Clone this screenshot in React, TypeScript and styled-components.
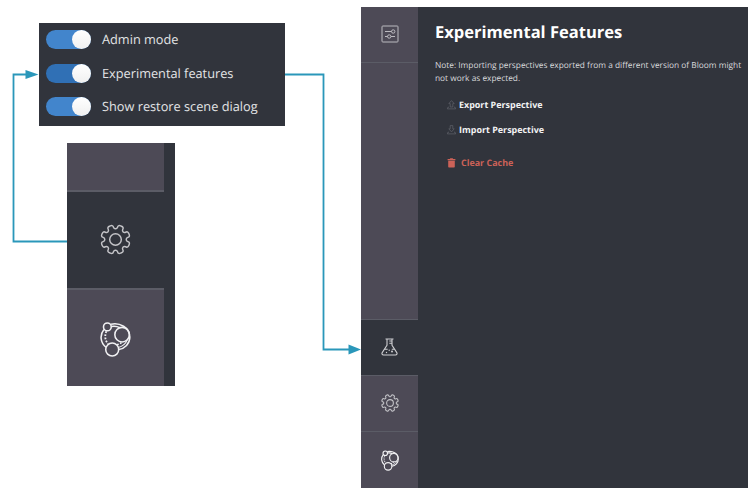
import React from "react";
import styled, { createGlobalStyle } from "styled-components";

const Global = createGlobalStyle`
  * { box-sizing: border-box; }
  html, body { margin: 0; background: #fff; }
  body { font-family: "Open Sans", "Noto Sans", sans-serif; overflow: hidden; text-rendering: geometricPrecision; }
  svg { display: block; }
  h1, p { margin: 0; }
`;

/* Free canvas holding the three captures and their connectors */
const Diagram = styled.main`
  position: relative;
  width: 755px;
  height: 494px;
  background: #fff;
  overflow: hidden;
`;

const Node = styled.section<{ $x: number; $y: number; $w: number; $h: number }>`
  position: absolute;
  left: ${(p) => p.$x}px;
  top: ${(p) => p.$y}px;
  width: ${(p) => p.$w}px;
  height: ${(p) => p.$h}px;
  background: #31343c;
  display: flex;
`;

const Connectors = styled.svg`
  position: absolute;
  inset: 0;
`;

const ToggleList = styled.div`
  display: flex;
  flex-direction: column;
  gap: 14.7px;
  padding: 7px 0 0 7px;
`;

const ToggleRow = styled.label`
  display: flex;
  align-items: center;
  gap: 11px;
  height: 19px;
  color: #e3e4e6;
  font-size: 12.75px;
  line-height: 19px;
  white-space: nowrap;
`;

const Track = styled.span<{ $focused?: boolean }>`
  display: flex;
  justify-content: flex-end;
  width: 45px;
  height: 19px;
  border-radius: 10px;
  background: ${(p) => (p.$focused ? "#3070b5" : "#4285cc")};
`;

const Knob = styled.span`
  width: 19px;
  height: 19px;
  border-radius: 50%;
  background: linear-gradient(#fff, #f0f0f0);
`;

const Rail = styled.nav<{ $w: number }>`
  display: flex;
  flex-direction: column;
  flex: none;
  width: ${(p) => p.$w}px;
  background: #4d4a56;
`;

const RailItem = styled.div<{ $h?: number; $active?: boolean; $line?: number; $lift?: number; $drop?: number }>`
  display: flex;
  align-items: center;
  justify-content: center;
  ${(p) => (p.$h ? `height: ${p.$h}px; flex: none;` : "flex: 1;")}
  padding-bottom: ${(p) => p.$lift ?? 0}px;
  padding-top: ${(p) => p.$drop ?? 0}px;
  background: ${(p) => (p.$active ? "#31343c" : "#4d4a56")};
  border-top: ${(p) => p.$line ?? 0}px solid #5b5c66;
`;

const Content = styled.div`
  flex: 1;
  padding: 12px 0 0 17px;
`;

const Title = styled.h1`
  color: #fff;
  font-size: 16.55px;
  line-height: 25px;
  font-weight: 700;
  white-space: nowrap;
`;

const Note = styled.p`
  margin-top: 15px;
  color: #d9dadc;
  font-size: 8.33px;
  line-height: 13px;
  white-space: nowrap;
`;

const Actions = styled.div`
  display: flex;
  flex-direction: column;
  padding: 13px 0 0 12px;
`;

const Action = styled.div<{ $danger?: boolean }>`
  display: flex;
  align-items: center;
  gap: ${(p) => (p.$danger ? 5 : 3)}px;
  height: 14px;
  margin-bottom: ${(p) => (p.$danger ? 0 : 11)}px;
  margin-top: ${(p) => (p.$danger ? 7.5 : 0)}px;
  color: ${(p) => (p.$danger ? "#cc6258" : "#f3f3f4")};
  font-size: 8.95px;
  line-height: 14px;
  font-weight: 700;
  white-space: nowrap;
`;

const gearPath = (() => {
  const at = (deg: number, r: number) => {
    const a = ((deg - 90) * Math.PI) / 180;
    return [16 + r * Math.cos(a), 16 + r * Math.sin(a)];
  };
  const pts: number[][] = [];
  for (let i = 0; i < 8; i++) {
    const c = i * 45 + 22.5;
    pts.push(at(c - 15, 11.2), at(c - 11, 15.3), at(c + 11, 15.3), at(c + 15, 11.2));
  }
  const f = (n: number) => n.toFixed(2);
  const mix = (a: number[], b: number[], t: number) => [a[0] + (b[0] - a[0]) * t, a[1] + (b[1] - a[1]) * t];
  return (
    pts
      .map((p, i) => {
        const a = mix(p, pts[(i + 31) % 32], 0.42);
        const b = mix(p, pts[(i + 1) % 32], 0.42);
        return `${i ? "L" : "M"}${f(a[0])} ${f(a[1])}Q${f(p[0])} ${f(p[1])} ${f(b[0])} ${f(b[1])}`;
      })
      .join("") + "Z"
  );
})();

const Gear = ({ size, weight }: { size: number; weight: number }) => (
  <svg width={size} height={size} viewBox="0 0 32 32" fill="none" stroke="#c4c4c8" strokeWidth={weight}>
    <path d={gearPath} />
    <circle cx="16" cy="16" r="6" />
  </svg>
);

const BloomLogo = ({ w, h, weight = 1.6 }: { w: number; h: number; weight?: number }) => (
  <svg width={w} height={h} viewBox="0 0 32 36" fill="none" stroke="#f1f1f3" strokeWidth={weight}>
    <circle cx="7.6" cy="5" r="4" />
    <circle cx="22.8" cy="13" r="7.5" />
    <circle cx="12.6" cy="28.4" r="6.7" />
    <path d="M11.4 2.2C20 .2 30.8 5.5 30.8 15.5c0 6.8-5.2 11.9-11.5 12.8" />
    <path d="M11.6 4.6c3-.5 6.2-.2 8.7 1.2" />
    <path d="M28.2 18.4c-1.6 3.9-5 6.8-9.4 7.8" strokeWidth={weight * 0.7} />
    <path d="M4.1 7.6C-.4 13 .1 21 6.2 26" />
    <path d="M6.6 9.5c-1.9 4.5-1.6 9.3 1.8 13" strokeDasharray="1.8 1.5" strokeWidth="1.9" />
    <path d="M17.5 23.3c2.6-.4 4.5-1.5 5.6-3.2" strokeDasharray="1.8 1.5" />
  </svg>
);

const Sliders = () => (
  <svg width="18" height="18" viewBox="0 0 18 18" fill="none" stroke="#bcbbc0" strokeWidth="1">
    <rect x="1" y="1" width="16" height="16" rx=".8" />
    <path d="M4 6.5h6.5M4 11.5h2.5M10 11.5h4" />
    <circle cx="12.2" cy="6.5" r="1.7" />
    <circle cx="8.2" cy="11.5" r="1.7" />
  </svg>
);

const Flask = () => (
  <svg width="17" height="18" viewBox="0 0 17 18" fill="none" stroke="#d0d0d3" strokeWidth="1.1" strokeLinejoin="round">
    <path d="M4.5 1h8M6 1v6.2L1.2 14.6c-.7 1.2 0 2.4 1.3 2.4h12c1.3 0 2-1.2 1.3-2.4L11 7.2V1M3.5 11.2h3.2M10.8 11.2h2.4M8.3 3h2.5M8.3 5.3h2.5" />
    <g fill="#d0d0d3" stroke="none">
      <circle cx="5.5" cy="14.5" r=".7" />
      <circle cx="8.2" cy="12.2" r=".7" />
      <circle cx="11" cy="13.5" r="1" />
    </g>
  </svg>
);

const Transfer = ({ down }: { down?: boolean }) => (
  <svg width="9" height="10" viewBox="0 0 9 10" fill="none" stroke="#5c5e66" strokeWidth=".8">
    <path d="M2 7.2H.9L.4 8.9h8.2l-.5-1.7H7" />
    <path d={down ? "M3.2 .6h2.6v3.2h1.4L4.5 6.9 1.8 3.8h1.4z" : "M3.2 7h2.6V3.6h1.4L4.5.6 1.8 3.6h1.4z"} />
  </svg>
);

const Trash = () => (
  <svg width="9" height="10" viewBox="0 0 9 10" fill="#cc6258">
    <path d="M.6 1h2.2l.5-.7h2.4l.5.7h2.2v1.2H.6zM1.2 2.8h6.6v5.7c0 .6-.4 1-1 1H2.2c-.6 0-1-.4-1-1z" />
  </svg>
);

export default function App() {
  return (
    <>
      <Global />
      <Diagram>
        <Node $x={39} $y={23} $w={246} $h={103}>
          <ToggleList>
            <ToggleRow><Track><Knob /></Track>Admin mode</ToggleRow>
            <ToggleRow><Track $focused><Knob /></Track>Experimental features</ToggleRow>
            <ToggleRow><Track><Knob /></Track>Show restore scene dialog</ToggleRow>
          </ToggleList>
        </Node>

        <Node $x={67} $y={143} $w={108} $h={243}>
          <Rail $w={97}>
            <RailItem $h={47} />
            <RailItem $h={98} $active $line={2} $lift={1}><Gear size={31} weight={1.5} /></RailItem>
            <RailItem $line={2} $drop={3}><BloomLogo w={31} h={35} /></RailItem>
          </Rail>
        </Node>

        <Node $x={361} $y={7} $w={387} $h={481}>
          <Rail $w={57}>
            <RailItem $h={55} $lift={2}><Sliders /></RailItem>
            <RailItem $line={1} />
            <RailItem $h={56} $active $line={1} $lift={2}><Flask /></RailItem>
            <RailItem $h={56} $line={1} $lift={2}><Gear size={18} weight={1.9} /></RailItem>
            <RailItem $h={57} $line={1} $drop={1}><BloomLogo w={18} h={21} weight={2} /></RailItem>
          </Rail>
          <Content>
            <Title>Experimental Features</Title>
            <Note>
              Note: Importing perspectives exported from a different version of Bloom might
              <br />
              not work as expected.
            </Note>
            <Actions>
              <Action><Transfer />Export Perspective</Action>
              <Action><Transfer down />Import Perspective</Action>
              <Action $danger><Trash />Clear Cache</Action>
            </Actions>
          </Content>
        </Node>

        <Connectors width="755" height="494" viewBox="0 0 755 494" fill="none" stroke="#2a97ba" strokeWidth="1.8">
          <path d="M67 241.5H13.5V74.5H27M285 74.5h38.5v275H349" />
          <path d="M25.5 70l13 4.5-13 4.5zM348.5 344.5l12.5 5-12.5 5z" fill="#2a97ba" stroke="none" />
        </Connectors>
      </Diagram>
    </>
  );
}
